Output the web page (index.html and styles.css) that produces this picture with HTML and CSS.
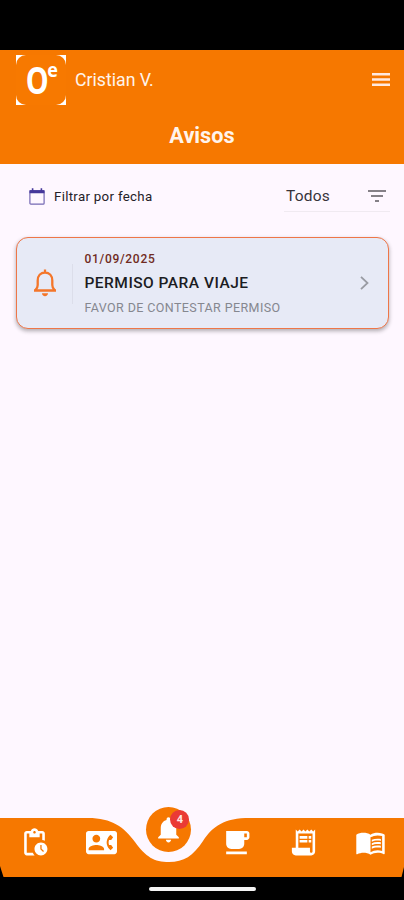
FILE: index.html
```html
<!DOCTYPE html>
<html lang="es">
<head>
	<meta charset="UTF-8">
	<title>Avisos</title>
	<link rel="stylesheet" href="styles.css">
</head>
<body>
	<div class="pantalla">
		<header class="cabecera">
			<div class="barra">
				<div class="logo">
					<div class="logo-fondo">
						<span class="logo-letra">O</span><span class="logo-sup">e</span>
					</div>
				</div>
				<span class="usuario">Cristian V.</span>
				<svg class="menu" viewBox="0 0 18 14"><path d="M0 0h18v2.6H0zM0 5.2h18v2.6H0zM0 10.4h18V13H0z"/></svg>
			</div>
			<h1>Avisos</h1>
		</header>

		<main>
			<div class="filtros">
				<div class="fecha">
					<svg viewBox="0 0 16 17"><path class="linea" d="M1.6 2.7h12.8a.7.7 0 0 1 .7.7v11.8a.9.9 0 0 1-.9.9H1.8a.9.9 0 0 1-.9-.9V3.4a.7.7 0 0 1 .7-.7z"/><path class="relleno" d="M.5 2.2h15v3.1H.5zM2.8.3h1.6v2.5H2.8zM11.6.3h1.6v2.5h-1.6z"/></svg>
					<span>Filtrar por fecha</span>
				</div>
				<div class="selector">
					<span>Todos</span>
					<svg viewBox="0 0 18 12"><path d="M0 0h18v2H0zM3 5h12v2H3zM7 10h4v2H7z"/></svg>
				</div>
			</div>

			<div class="aviso">
				<svg class="campana" viewBox="0 0 24 28"><path d="M12 3.200V.4M1 21.500h22M2.400 21.200c1.700-1.500 2.300-3 2.300-5.200v-4.500c0-4.700 2.900-8 7.300-8s7.300 3.300 7.300 8V16c0 2.200.6 3.700 2.300 5.200"/><path class="badajo" d="M9 24.300h6c0 1.700-1.300 2.900-3 2.900s-3-1.200-3-2.900z"/></svg>
				<div class="texto">
					<span class="dia">01/09/2025</span>
					<span class="titulo">PERMISO PARA VIAJE</span>
					<span class="detalle">FAVOR DE CONTESTAR PERMISO</span>
				</div>
				<svg class="flecha" viewBox="0 0 9 14"><path d="M1 .8L7.500 7 1 13.200"/></svg>
			</div>
		</main>

		<nav class="menu-inferior">
			<!-- fondo con el hueco para el boton activo -->
			<svg class="fondo" viewBox="0 0 404 59"><path d="M0 0H88C112 0 124 9 135 24C146 39 154 44 169 44C184 44 193 38 203 23C213 8 224 0 250 0H404V49L401.500 59H3.500L0 48z"/></svg>
			<a class="item"><svg viewBox="0 0 24 24"><path d="M17 12c-2.760 0-5 2.240-5 5s2.240 5 5 5 5-2.240 5-5-2.240-5-5-5zm1.650 7.350L16.500 17.200V14h1v2.790l1.850 1.850-.7.71zM18 3h-3.180C14.400 1.840 13.300 1 12 1s-2.400.84-2.820 2H6c-1.100 0-2 .9-2 2v15c0 1.100.9 2 2 2h6.110a6.743 6.743 0 0 1-1.420-2H6V5h2v3h8V5h2v5.080c.71.1 1.380.31 2 .6V5c0-1.100-.9-2-2-2zm-6 2c-.55 0-1-.45-1-1s.45-1 1-1 1 .45 1 1-.45 1-1 1z"/></svg></a>
			<a class="item"><svg viewBox="0 0 24 24"><path d="M22 3H2C.9 3 0 3.900 0 5v14c0 1.100.9 2 2 2h20c1.100 0 1.990-.9 1.990-2L24 5c0-1.100-.9-2-2-2zM8 6c1.660 0 3 1.340 3 3s-1.340 3-3 3-3-1.340-3-3 1.340-3 3-3zm6 12H2v-1c0-2 4-3.100 6-3.100s6 1.100 6 3.100v1zm3.850-4h1.640L21 16l-1.990 1.990c-1.310-.98-2.280-2.380-2.730-3.990-.18-.64-.28-1.310-.28-2s.1-1.360.28-2c.45-1.620 1.420-3.010 2.730-3.990L21 8l-1.510 2h-1.640c-.22.63-.35 1.300-.35 2s.13 1.370.35 2z"/></svg></a>
			<a class="item">
				<span class="activo">
					<svg viewBox="0 0 24 24"><path d="M12 22c1.100 0 2-.9 2-2h-4c0 1.100.89 2 2 2zm6-6v-5c0-3.070-1.640-5.640-4.500-6.320V4c0-.83-.67-1.500-1.500-1.500s-1.500.67-1.500 1.500v.68C7.630 5.360 6 7.920 6 11v5l-2 2v1h16v-1l-2-2z"/></svg>
					<span class="globo">4</span>
				</span>
			</a>
			<a class="item"><svg viewBox="0 0 24 24"><path d="M20 3H4v10c0 2.210 1.790 4 4 4h6c2.210 0 4-1.790 4-4v-3h2c1.110 0 2-.89 2-2V5c0-1.110-.89-2-2-2zm0 5h-2V5h2v3zM4 19h16v2H4z"/></svg></a>
			<a class="item"><svg viewBox="0 0 24 24"><path d="M19.500 3.500L18 2l-1.500 1.500L15 2l-1.500 1.500L12 2l-1.500 1.500L9 2 7.500 3.500 6 2v14H3v3c0 1.660 1.340 3 3 3h12c1.660 0 3-1.340 3-3V2l-1.500 1.500zM19 19c0 .55-.45 1-1 1s-1-.45-1-1v-3H8V5h11v14zM9 7h6v2H9zM16 7h2v2h-2zM9 10h6v2H9zM16 10h2v2h-2z"/></svg></a>
			<a class="item"><svg viewBox="0 0 24 24"><path d="M21 5c-1.110-.35-2.330-.5-3.500-.5-1.950 0-4.050.4-5.500 1.500-1.450-1.100-3.550-1.500-5.500-1.500S2.450 4.900 1 6v14.650c0 .25.25.5.5.5.1 0 .15-.05.25-.05C3.100 20.450 5.050 20 6.500 20c1.950 0 4.050.4 5.500 1.500 1.350-.85 3.800-1.500 5.500-1.500 1.650 0 3.350.3 4.750 1.050.1.05.15.05.25.05.25 0 .5-.25.5-.5V6c-.6-.45-1.250-.75-2-1zm0 13.500c-1.100-.35-2.300-.5-3.500-.5-1.700 0-4.150.65-5.500 1.500V8c1.350-.85 3.800-1.500 5.500-1.500 1.200 0 2.400.15 3.500.5v11.500z"/><path d="M17.500 10.500c.88 0 1.730.09 2.500.26V9.240c-.79-.15-1.640-.24-2.500-.24-1.700 0-3.240.29-4.500.83v1.660c1.130-.64 2.700-.99 4.500-.99zM13 12.490v1.660c1.130-.64 2.700-.99 4.500-.99.88 0 1.730.09 2.500.26V11.900c-.79-.15-1.640-.24-2.500-.24-1.700 0-3.240.3-4.500.83zM17.500 14.330c-1.700 0-3.240.29-4.500.83v1.660c1.130-.64 2.700-.99 4.500-.99.88 0 1.730.09 2.500.26v-1.520c-.79-.16-1.640-.24-2.500-.24z"/></svg></a>
		</nav>

		<footer class="gestos"><div class="linea-inicio"></div></footer>
	</div>
</body>
</html>
```
FILE: styles.css
```css
*{
    box-sizing: border-box;
}
body{
    margin: 0;
    font-family: Roboto, sans-serif;
    background-color: #000;
}
svg{
    display: block;
    flex-shrink: 0;
}
.pantalla{
    display: flex;
    flex-direction: column;
    width: 404px;
    height: 900px;
    padding-top: 50px;
    background-color: #000;
}

/* cabecera */
.cabecera{
    height: 114px;
    background-color: #f67800;
    color: #fff4ec;
}
.barra{
    display: flex;
    align-items: center;
    height: 59px;
    padding: 0 14px 0 16px;
}
.logo{
    width: 50px;
    height: 50px;
    background-color: #fff;
}
.logo-fondo{
    display: flex;
    justify-content: center;
    height: 50px;
    border-radius: 10px;
    background-color: #f77900;
    color: #fff;
    font-weight: bold;
}
.logo-letra{
    font: bold 38px/48px "Open Sans", sans-serif;
    transform: scaleX(0.76);
    margin: 0 -5px 0 -2px;
}
.logo-sup{
    font: bold 19px/31px "Open Sans", sans-serif;
    transform: scaleX(0.95);
}
.usuario{
    flex: 1;
    margin-left: 9px;
    font-size: 17.7px;
}
.menu{
    width: 18px;
    height: 14px;
    fill: #ffe9e0;
}
.cabecera h1{
    margin: 0;
    padding-top: 14px;
    font-size: 21.7px;
    line-height: 26px;
    font-weight: 700;
    text-align: center;
}

/* contenido */
main{
    flex: 1;
    background-color: #fef7ff;
}
.filtros{
    display: flex;
    justify-content: space-between;
    padding: 16px 14px 0 29px;
}
.fecha, .selector{
    display: flex;
    align-items: center;
    height: 32px;
}
.fecha{
    gap: 9px;
    font-size: 13.3px;
    letter-spacing: 0.3px;
    color: #252128;
}
.fecha svg{
    width: 16px;
    height: 17px;
}
.fecha .linea{
    fill: none;
    stroke: #7469b4;
    stroke-width: 1.2;
}
.fecha .relleno{
    fill: #45389b;
}
.selector{
    justify-content: space-between;
    width: 106px;
    padding: 0 4px 0 2px;
    border-bottom: 1px solid #f0eaf1;
    font-size: 15.5px;
    letter-spacing: 0.2px;
    color: #37333a;
}
.selector svg{
    width: 18px;
    height: 12px;
    fill: #858087;
}
.aviso{
    display: flex;
    align-items: center;
    height: 92px;
    margin: 25px 15px 0 16px;
    padding: 0 19px 0 16px;
    border: 1.5px solid #ee7648;
    border-radius: 12px;
    background-color: #e7eaf6;
    box-shadow: 0 2px 4px rgba(0, 0, 0, 0.32);
}
.campana{
    width: 24px;
    height: 28px;
    fill: none;
    stroke: #f4762a;
    stroke-width: 2.3;
}
.campana .badajo{
    fill: #f4762a;
    stroke: none;
}
.texto{
    flex: 1;
    display: flex;
    flex-direction: column;
    position: relative;
    margin-left: 27.5px;
    white-space: nowrap;
}
/* separador vertical junto a la campana */
.texto::before{
    content: "";
    position: absolute;
    left: -13px;
    top: 15px;
    width: 1px;
    height: 40px;
    background-color: #dcdeea;
}
.dia{
    font-size: 12px;
    line-height: 20px;
    font-weight: 500;
    letter-spacing: 0.7px;
    color: #702b22;
}
.titulo{
    font-size: 15.5px;
    line-height: 28px;
    font-weight: 500;
    letter-spacing: 0.48px;
    color: #1b1c22;
}
.detalle{
    font-size: 12.5px;
    line-height: 21px;
    letter-spacing: 0.4px;
    color: #85878f;
}
.flecha{
    width: 9px;
    height: 14px;
    fill: none;
    stroke: #999ba3;
    stroke-width: 1.8;
}

/* menu inferior */
.menu-inferior{
    position: relative;
    display: flex;
    height: 59px;
    background: linear-gradient(#fef7ff 46px, #000 46px);
}
.menu-inferior .fondo{
    position: absolute;
    left: 0;
    top: 0;
    width: 404px;
    height: 59px;
    fill: #f67800;
}
.item{
    position: relative;
    flex: 1;
    display: flex;
    justify-content: center;
    padding: 9px 0 0 1px;
}
.item svg{
    width: 31px;
    height: 31px;
    fill: #fff;
}
.activo{
    display: flex;
    align-items: center;
    justify-content: center;
    position: relative;
    top: -20px;
    width: 45px;
    height: 45px;
    border-radius: 50%;
    background-color: #f67800;
}
.globo{
    position: absolute;
    right: 2px;
    top: 3px;
    width: 19px;
    height: 19px;
    border-radius: 50%;
    background-color: #ea3a35;
    color: #ffe9e6;
    font-size: 11px;
    font-weight: 700;
    line-height: 19px;
    text-align: center;
}

.gestos{
    height: 23px;
    padding-top: 10px;
}
.linea-inicio{
    width: 107px;
    height: 4px;
    margin: 0 auto;
    border-radius: 2px;
    background-color: #f4f4f4;
}
```
